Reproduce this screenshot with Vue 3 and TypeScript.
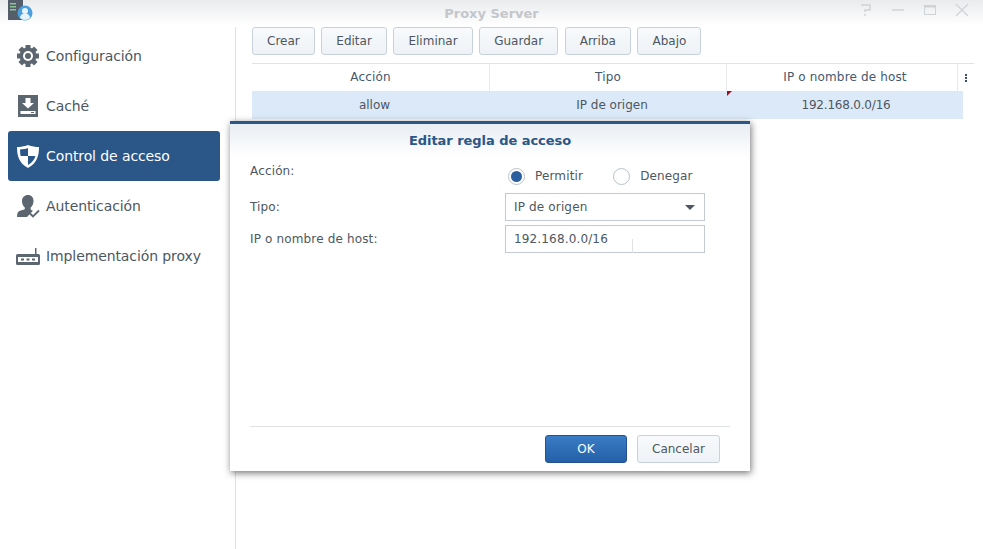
<script setup lang="ts">
const toolbar = ['Crear', 'Editar', 'Eliminar', 'Guardar', 'Arriba', 'Abajo']
const gearTeeth = [0, 45, 90, 135, 180, 225, 270, 315]
</script>

<template>
  <div class="window">
    <header class="titlebar">
      <svg class="app-icon" width="26" height="22" viewBox="0 0 26 22">
        <rect x="0" y="0" width="15" height="20" fill="#555d6b" />
        <rect x="2" y="3" width="6" height="1.5" fill="#8fc49a" />
        <rect x="2" y="6" width="6" height="1.5" fill="#8fc49a" />
        <rect x="2" y="9" width="6" height="1.5" fill="#8fc49a" />
        <circle cx="17" cy="13" r="7.5" fill="#4a9fdc" />
        <circle cx="17" cy="11" r="3" fill="#e6f3fb" />
        <path d="M12 18c.5-3.500 2.500-4.500 5-4.500s4.500 1 5 4.500a7.500 7.500 0 0 1-10 0z" fill="#e6f3fb" />
      </svg>
      <span class="title">Proxy Server</span>
      <div class="win-controls">
        <svg width="14" height="14" viewBox="0 0 14 14" fill="none" stroke="#d0d3d6" stroke-width="1.500">
          <path d="M2 2h9v5H6v2" />
          <path d="M6 11v2" />
        </svg>
        <svg width="14" height="14" viewBox="0 0 14 14" fill="none" stroke="#d0d3d6" stroke-width="1.500">
          <path d="M1 7h12" />
        </svg>
        <svg width="14" height="14" viewBox="0 0 14 14" fill="none" stroke="#d0d3d6">
          <rect x="1.500" y="2.500" width="11" height="9" stroke-width="1" />
          <path d="M1 3.500h12" stroke-width="2" />
        </svg>
        <svg width="14" height="14" viewBox="0 0 14 14" fill="none" stroke="#d0d3d6" stroke-width="1.300">
          <path d="M1 1l12 12M13 1L1 13" />
        </svg>
      </div>
    </header>

    <div class="content">
      <nav class="sidebar">
        <a class="nav-item">
          <svg class="nav-icon" width="24" height="24" viewBox="0 0 24 24">
            <rect
              v-for="deg in gearTeeth"
              :key="deg"
              x="9.500"
              y="1"
              width="5"
              height="5"
              fill="#5c6670"
              :transform="`rotate(${deg} 12 12)`"
            />
            <circle cx="12" cy="12" r="8.500" fill="#5c6670" />
            <circle cx="12" cy="12" r="5" fill="#fff" />
            <circle cx="12" cy="12" r="3" fill="#5c6670" />
          </svg>
          Configuración
        </a>
        <a class="nav-item">
          <svg class="nav-icon" width="24" height="24" viewBox="0 0 24 24">
            <rect x="2" y="1" width="20" height="22" fill="#5c6670" />
            <path d="M9.500 4h5v5h3.500L12 14.500 6 9h3.500z" fill="#fff" />
            <rect x="4.500" y="17" width="15" height="3" fill="#fff" />
            <rect x="15" y="18" width="3" height="1" fill="#5c6670" />
          </svg>
          Caché
        </a>
        <a class="nav-item active">
          <svg class="nav-icon" width="24" height="24" viewBox="0 0 24 24">
            <path d="M12 1c4 1.500 7.500 2 11 2 0 9-2 16-11 21C3 19 1 12 1 3c3.500 0 7-.5 11-2z" fill="#fff" />
            <path d="M12 4c-2.500 1-5 1.400-8 1.500.1 2 .2 4 .6 6.500H12zM12 12v9c4.500-2.800 6.500-5.500 7.400-9z" fill="#2b5688" />
          </svg>
          Control de acceso
        </a>
        <a class="nav-item">
          <svg class="nav-icon" width="24" height="24" viewBox="0 0 24 24">
            <path
              d="M12 1c3.500 0 5.500 2.500 5.500 6 0 2.500-1 5-2.800 6.500v2c.5.500 1.300 1 2.300 1.200L11 23H1c0-4 1-5.500 3-6.200 2-.6 4-1 4.800-1.500v-1.800C7 12 6 9.500 6 7c0-3.500 2.500-6 6-6z"
              fill="#5c6670"
            />
            <path d="M14 19.500l3 3 6-6" fill="none" stroke="#5c6670" stroke-width="1.800" />
          </svg>
          Autenticación
        </a>
        <a class="nav-item">
          <svg class="nav-icon" width="24" height="24" viewBox="0 0 24 24">
            <rect x="0" y="10" width="24" height="11" rx="1.500" fill="#5c6670" />
            <rect x="19" y="4" width="1.500" height="7" fill="#5c6670" />
            <rect x="2" y="13" width="20" height="5" fill="#fff" />
            <rect x="5" y="14.500" width="3" height="2" fill="#5c6670" />
            <rect x="10.500" y="14.500" width="3" height="2" fill="#5c6670" />
            <rect x="16" y="14.500" width="3" height="2" fill="#5c6670" />
          </svg>
          Implementación proxy
        </a>
      </nav>

      <main class="main">
        <div class="toolbar">
          <button v-for="label in toolbar" :key="label" class="btn">{{ label }}</button>
        </div>
        <div class="grid">
          <div class="grid-head">
            <div class="col-a">Acción</div>
            <div class="col-b">Tipo</div>
            <div class="col-c head-ip">IP o nombre de host</div>
            <div class="col-menu">
              <span class="dots"><i></i><i></i><i></i></span>
            </div>
          </div>
          <div class="grid-row">
            <div class="col-a">allow</div>
            <div class="col-b dirty">IP de origen</div>
            <div class="col-c ip-cell">192.168.0.0/16</div>
          </div>
        </div>
      </main>
    </div>

    <section class="dialog">
      <div class="dialog-title">Editar regla de acceso</div>
      <form class="dialog-body" @submit.prevent>
        <div class="field field-radio">
          <label class="field-label">Acción:</label>
          <div class="radios">
            <span class="radio checked"></span>
            <span class="radio-label">Permitir</span>
            <span class="radio"></span>
            <span class="radio-label">Denegar</span>
          </div>
        </div>
        <div class="field field-type">
          <label class="field-label">Tipo:</label>
          <div class="input select">
            IP de origen
            <span class="caret"></span>
          </div>
        </div>
        <div class="field">
          <label class="field-label">IP o nombre de host:</label>
          <div class="input">
            192.168.0.0/16
            <span class="cursor"></span>
          </div>
        </div>
      </form>
      <footer class="dialog-footer">
        <button class="btn primary">OK</button>
        <button class="btn cancel">Cancelar</button>
      </footer>
    </section>
  </div>
</template>

<style>
html,
body {
  margin: 0;
  background: #fff;
}
</style>

<style scoped>
.window {
  position: relative;
  width: 983px;
  height: 549px;
  overflow: hidden;
  background: #fff;
  font-family: "DejaVu Sans", Verdana, sans-serif;
  font-size: 12px;
  color: #4d5761;
}

.titlebar {
  position: relative;
  display: flex;
  align-items: center;
  justify-content: center;
  height: 26px;
  background: linear-gradient(#e9ebed, #ffffff);
}

.app-icon {
  position: absolute;
  left: 8px;
  top: 0;
}

.title {
  font-size: 13px;
  font-weight: 700;
  color: #c3c7cb;
}

.win-controls {
  position: absolute;
  right: 14px;
  top: 3px;
  display: flex;
  gap: 18px;
}

.content {
  display: flex;
  height: 523px;
}

.sidebar {
  width: 236px;
  height: 522px;
  margin-top: 1px;
  padding: 4px 15px 0 8px;
  box-sizing: border-box;
  border-right: 1px solid #e0e3e6;
  display: flex;
  flex-direction: column;
}

.nav-item {
  display: flex;
  align-items: center;
  gap: 6px;
  height: 50px;
  padding-left: 8px;
  border-radius: 3px;
  font-size: 14px;
  letter-spacing: -0.1px;
  color: #4d5761;
}

.nav-item.active {
  background: #2b5688;
  color: #fff;
}

.nav-icon {
  flex: none;
}

.main {
  flex: 1;
  padding: 1px 9px 0 16px;
}

.toolbar {
  display: flex;
  gap: 6.600px;
  height: 28px;
}

.btn {
  height: 28px;
  padding: 0 14px;
  border: 1px solid #c8d2dc;
  border-radius: 3px;
  background: linear-gradient(#f8fafc, #eef2f6);
  font: inherit;
  font-size: 12px;
  color: #4d5761;
}

.grid {
  margin-top: 8px;
}

.grid-head,
.grid-row {
  display: flex;
  text-align: center;
}

.grid-head {
  height: 27px;
  border-top: 1px solid #dfe4e9;
  color: #45586d;
  letter-spacing: 0.15px;
}

.grid-head > div {
  box-sizing: border-box;
  line-height: 26px;
  border-right: 1px solid #e6e9ec;
}

.grid-head > .head-ip {
  padding-left: 6px;
}

.grid-row {
  width: 711px;
  height: 28px;
  line-height: 28px;
  background: #dce9f8;
}

.grid-row > div {
  box-sizing: border-box;
  padding-left: 7px;
}

.ip-cell {
  letter-spacing: -0.2px;
}

.col-a {
  width: 238px;
}

.col-b {
  width: 237px;
}

.col-c {
  width: 231px;
}

.col-menu {
  width: 16px;
  border-right: 0 !important;
  display: flex;
  align-items: center;
  justify-content: center;
}

.dots {
  display: flex;
  flex-direction: column;
  gap: 1px;
}

.dots i {
  width: 2px;
  height: 2px;
  background: #3d5168;
}

.dirty {
  position: relative;
}

.dirty::after {
  content: "";
  position: absolute;
  top: 0;
  right: -5px;
  border-style: solid;
  border-width: 5px 5px 0 0;
  border-color: #a30d1c transparent transparent transparent;
}

.dialog {
  position: absolute;
  left: 230px;
  top: 121px;
  width: 520px;
  height: 350px;
  box-sizing: border-box;
  display: flex;
  flex-direction: column;
  background: #fff;
  border-top: 3px solid #2b5688;
  box-shadow: 1px 2px 7px rgba(0, 0, 0, 0.55);
}

.dialog-title {
  height: 33px;
  line-height: 33px;
  text-align: center;
  font-size: 13px;
  font-weight: 700;
  letter-spacing: -0.05px;
  color: #2b5688;
  background: linear-gradient(#e8edf2, #ffffff);
}

.dialog-body {
  flex: 1;
  padding: 4px 45px 0 20px;
  letter-spacing: 0.15px;
}

.field {
  display: flex;
  align-items: center;
  justify-content: space-between;
  height: 28px;
}

.field-radio {
  align-items: flex-start;
}

.field-label {
  line-height: 20px;
}

.field-type {
  margin: 4px 0;
}

.radios {
  width: 200px;
  height: 28px;
  display: flex;
  align-items: center;
  padding-top: 2px;
  box-sizing: border-box;
}

.radio {
  flex: none;
  width: 17px;
  height: 17px;
  margin-left: 3px;
  box-sizing: border-box;
  border: 1px solid #b9c3cd;
  border-radius: 50%;
  background: #fff;
  display: flex;
  align-items: center;
  justify-content: center;
}

.radio.checked::after {
  content: "";
  width: 11px;
  height: 11px;
  border-radius: 50%;
  background: #2b5f9e;
}

.radio-label {
  flex: none;
  margin: 0 27px 0 10px;
}

.radio-label:last-child {
  margin-right: 0;
}

.input {
  position: relative;
  width: 200px;
  height: 28px;
  line-height: 26px;
  padding: 0 8px;
  box-sizing: border-box;
  border: 1px solid #c3cad1;
  background: #fff;
}

.caret {
  position: absolute;
  right: 9px;
  top: 11px;
  border-style: solid;
  border-width: 5px 5px 0;
  border-color: #4d5761 transparent transparent;
}

.cursor {
  position: absolute;
  left: 126px;
  top: 13px;
  width: 1px;
  height: 14px;
  background: #dfe2e5;
}

.dialog-footer {
  margin: 0 20px;
  height: 45px;
  box-sizing: border-box;
  border-top: 1px solid #dfe3e7;
  display: flex;
  justify-content: flex-end;
  gap: 10px;
  padding: 8px 10px 0 0;
}

.dialog-footer .btn {
  padding: 0;
}

.primary {
  width: 82px;
  border-color: #24528f;
  background: linear-gradient(#3a7cc6, #2460a8);
  color: #fff;
}

.cancel {
  width: 83px;
}
</style>
